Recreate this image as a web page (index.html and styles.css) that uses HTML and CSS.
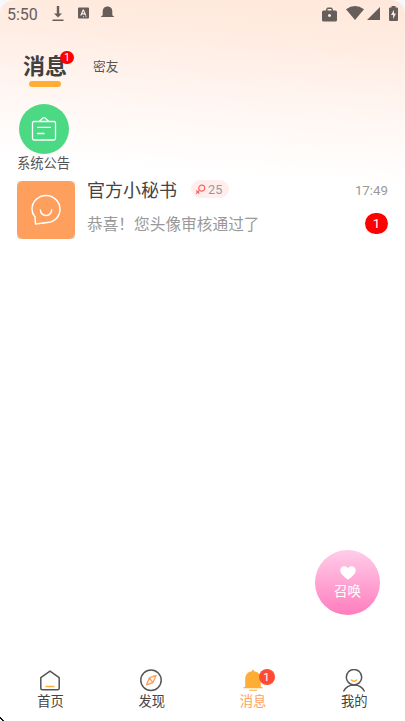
FILE: index.html
```html
<!DOCTYPE html>
<html lang="zh-CN">
<head>
<meta charset="utf-8">
<meta name="viewport" content="width=device-width, initial-scale=1">
<title>消息</title>
<link rel="stylesheet" href="styles.css">
</head>
<body>
<div class="app">
  <header class="status">
    <span class="clock">5:50</span>
    <svg class="s-download" width="12" height="16" viewBox="0 0 12 16"><path d="M4.8 0h2.4v7.4h2.8L6 11.4 2 7.4h2.8zM.5 13.5h11V15H.5z"/></svg>
    <svg class="s-input" width="11" height="12" viewBox="0 0 11 12"><path fill-rule="evenodd" d="M1 .5h9q1 0 1 1v9q0 1-1 1H1q-1 0-1-1v-9q0-1 1-1zM4.7 2.5 2.2 8.5h1.4l.4-1.1h2.6l.4 1.1h1.4L5.9 2.5zM5.3 4.1l.8 2.2H4.5zM5 9.3h1v1H5zM7.5 9.3h1v1h-1z"/></svg>
    <svg class="s-bell" width="13" height="12" viewBox="0 0 13 12"><path d="M5.200.8Q6.500-.2 7.800.8 11.300 1.600 11.300 5.500V9.300L13 10.400V11H0v-.6L1.700 9.300V5.500Q1.700 1.600 5.200.8z"/></svg>
    <span class="spacer"></span>
    <svg class="s-case" width="15" height="15" viewBox="0 0 15 15"><path fill-rule="evenodd" d="M4 3.500V2l1.500-1.500h4L11 2v1.500h2.500Q15 3.500 15 5v8q0 1.500-1.500 1.500h-12Q0 14.500 0 13V5q0-1.500 1.500-1.500zM5.500 3.500h4V2h-4zM7.500 7a1.500 1.500 0 1 0 .01 0z"/></svg>
    <svg class="s-wifi" width="18" height="14" viewBox="0 0 18 14"><path d="M0 3.200Q9-3.200 18 3.200L9 14z"/></svg>
    <svg class="s-signal" width="13" height="13" viewBox="0 0 13 13"><path d="M13 0v13H0z"/></svg>
    <svg class="s-battery" width="9" height="15" viewBox="0 0 9 15"><path fill-rule="evenodd" d="M2.500 0h4v1.500H8q1 0 1 1V14q0 1-1 1H1q-1 0-1-1V2.500q0-1 1-1h1.500zM5 3.700 2 9h2.100v4L7 7.600H5z"/></svg>
  </header>

  <nav class="tabs">
    <div class="tab active">消息<span class="tab-badge">1</span></div>
    <div class="tab">密友</div>
  </nav>

  <section class="notice">
    <div class="notice-icon">
      <svg width="26" height="26" viewBox="0 0 26 26" fill="none" stroke="#fff" stroke-width="1.300" stroke-linecap="round" stroke-linejoin="round"><rect x="1.500" y="5.500" width="23" height="18.500" rx="1.500"/><path d="M8.500 5.200 12 2q1-.8 2 0l3.500 3.200M6.500 11.300h13M6.500 17.500H13"/></svg>
    </div>
    <span>系统公告</span>
  </section>

  <main class="list">
    <article class="chat">
      <div class="avatar-wrap"><div class="avatar">
        <svg width="32" height="32" viewBox="0 0 32 32" fill="none" stroke="#fff" stroke-width="1.500" stroke-linecap="round" stroke-linejoin="round"><path d="M5.500 30 5 22.800C2.700 20.300 2 18 2 15.300A14 13.800 0 0 1 30 15.300C30 22 25 27.800 17.500 28.500zM10.300 16C11.300 23.300 20.700 23.300 21.700 16"/></svg>
      </div></div>
      <div class="chat-body">
        <div class="chat-row">
          <span class="name">官方小秘书</span>
          <span class="age"><svg width="11" height="11" viewBox="0 0 11 11" fill="none" stroke="#ff625f" stroke-width="1.200"><circle cx="6.700" cy="4.200" r="3"/><path d="M4.500 6.400 1 9.900M1.300 6.500l3 3"/></svg>25</span>
          <time>17:49</time>
        </div>
        <div class="chat-row second">
          <span class="preview">恭喜！您头像审核通过了</span>
          <span class="unread">1</span>
        </div>
      </div>
    </article>
  </main>

  <button class="summon">
    <svg width="16" height="14" viewBox="0 0 16 14"><path fill="#fff" d="M8 13.500Q6.800 13.200 3 9.500C.8 7.300.3 5.800.3 4.300.3-.2 6-.9 8 2.300 10-.9 15.700-.2 15.700 4.300c0 1.500-.5 3-2.700 5.200Q9.200 13.200 8 13.500z"/></svg>
    <span>召唤</span>
  </button>

  <footer class="nav">
    <div class="nav-item">
      <svg width="24" height="24" viewBox="0 0 24 24" fill="none" stroke="#555" stroke-width="1.500" stroke-linejoin="round"><path d="M2.800 8.700 12 2.100l9.200 6.600v10.600q0 1.500-1.500 1.500H4.300q-1.500 0-1.500-1.500z"/><path stroke="#ffae35" d="M7.500 17.500h9"/></svg>
      <span>首页</span>
    </div>
    <div class="nav-item">
      <svg width="24" height="24" viewBox="0 0 24 24" fill="none" stroke="#555" stroke-width="1.500" stroke-linejoin="round"><circle cx="12" cy="11.300" r="10.200"/><path stroke="#ff9f61" stroke-width="1.400" d="m17 6.500-6.700 2.400-2.800 7 6.500-2.400zM10.300 8.900l3.700 4.600"/></svg>
      <span>发现</span>
    </div>
    <div class="nav-item current">
      <svg width="24" height="24" viewBox="0 0 24 24" fill="#ffae35"><path d="M11 2.200Q11 .6 12 .6t1 1.600q6.800 1 6.800 7.600v8.200h1.700v1.200h-19v-1.200h1.700V9.800Q4.200 3.200 11 2.200zM8.200 20.800h7.800v1H8.200z"/></svg>
      <span class="nav-badge">1</span>
      <span>消息</span>
    </div>
    <div class="nav-item">
      <svg width="24" height="24" viewBox="0 0 24 24" fill="none" stroke="#555" stroke-width="1.500" stroke-linecap="round"><circle cx="12" cy="8.200" r="7.700"/><path d="M1.800 22C3.500 18.300 6.500 15.900 12 15.900s8.500 2.400 10.200 6.100"/><path stroke="#ffae35" d="M9.300 11q2.700 2.600 5.400 0"/></svg>
      <span>我的</span>
    </div>
  </footer>
  <i class="corner"></i>
</div>
</body>
</html>
```
FILE: styles.css
```css
* { box-sizing: border-box; }
body {
  margin: 0;
  background: #f7f8f9;
  font-family: Roboto, "Noto Sans CJK SC", sans-serif;
  color: #444;
}
.app {
  position: relative;
  display: flex;
  flex-direction: column;
  width: 405px;
  height: 721px;
  overflow: hidden;
  border-radius: 14px 14px 0 0;
  background: linear-gradient(184deg, #ffe8db 0, #ffebe0 40px, #fff3ed 95px, #fffaf8 145px, #fff 188px);
}
.status {
  display: flex;
  align-items: flex-start;
  height: 46px;
  padding: 6px 7px 0;
  color: #655e5a;
}
.status svg { fill: #655e5a; flex: none; }
.clock { font-size: 16px; line-height: 17px; width: 31px; }
.s-download { margin-left: 14px; }
.s-input { margin: 1px 0 0 14px; }
.s-bell { margin-left: 12px; }
.spacer { flex: 1; }
.s-case { margin-top: 1px; }
.s-wifi { margin-left: 9px; }
.s-signal { margin: 1px 0 0 3px; }
.s-battery { margin-left: 9px; }
.tabs {
  display: flex;
  align-items: center;
  gap: 26px;
  height: 42px;
  padding-left: 23px;
}
.tab { font-size: 12.700px; line-height: 20px; color: #555; }
.tab.active {
  position: relative;
  height: 42px;
  padding: 6px 0 0;
  font-size: 22px;
  line-height: 29px;
  font-weight: 700;
  color: #404040;
}
.tab.active::after {
  content: "";
  display: block;
  width: 32px;
  height: 6px;
  margin: 0 auto;
  border-radius: 3px;
  background: #ffae35;
}
.tab-badge {
  position: absolute;
  top: 5px;
  right: -7px;
  width: 14px;
  height: 13px;
  border-radius: 7px;
  background: #f00;
  color: #fff;
  font-size: 10px;
  font-weight: 400;
  line-height: 13px;
  text-align: center;
}
.notice {
  display: flex;
  flex-direction: column;
  align-items: center;
  width: 54px;
  height: 92px;
  margin-left: 17px;
  padding-top: 16px;
  font-size: 13.300px;
  line-height: 19px;
  color: #555;
  white-space: nowrap;
}
.notice span { margin-right: 1px; }
.notice-icon {
  display: flex;
  align-items: center;
  justify-content: center;
  width: 50px;
  height: 50px;
  flex: none;
  border-radius: 50%;
  background: #4cd983;
}
.list { flex: 1; }
.chat { display: flex; gap: 12px; padding: 1px 17px 0; }
.avatar-wrap { width: 58px; height: 58px; background: #dcdcdc; border-radius: 3px; flex: none; }
.avatar {
  display: flex;
  align-items: center;
  justify-content: center;
  height: 58px;
  border-radius: 6px;
  background: #ff9f5e;
}
.chat-body { flex: 1; }
.chat-row { display: flex; align-items: center; height: 18px; }
.chat-row.second { height: 22px; margin-top: 13px; }
.name { font-size: 18px; line-height: 18px; padding-top: 2px; margin-right: -1px; }
.age {
  display: flex;
  align-items: center;
  gap: 2px;
  width: 38px;
  height: 18px;
  margin: -2px 0 0 15px;
  padding-left: 4px;
  border-radius: 9px;
  background: #ffeeed;
  color: #999;
  font-size: 12.700px;
}
time { margin-left: auto; font-size: 13.300px; color: #999; }
.preview { font-size: 15.700px; line-height: 20px; padding-top: 3px; color: #999; }
.unread {
  width: 23px;
  height: 21px;
  margin-left: auto;
  border-radius: 11px;
  background: #f00;
  color: #fff;
  font-size: 13.300px;
  line-height: 21px;
  text-align: center;
}
.summon {
  position: absolute;
  left: 315px;
  top: 550px;
  display: flex;
  flex-direction: column;
  align-items: center;
  gap: 1px;
  width: 65px;
  height: 65px;
  padding: 16px 0 0;
  border: 0;
  border-radius: 50%;
  background: linear-gradient(#ffcde9, #ff7dbe);
  color: #fff;
  font: 13.500px/20px Roboto, "Noto Sans CJK SC", sans-serif;
}
.nav { display: flex; height: 52px; }
.nav-item {
  position: relative;
  flex: 1;
  display: flex;
  flex-direction: column;
  align-items: center;
  font-size: 13.300px;
  line-height: 18px;
}
.nav-item svg { margin-left: -1px; }
.nav-item.current { color: #ff9f61; }
.nav-badge {
  position: absolute;
  left: 56px;
  top: 0;
  width: 16px;
  height: 16px;
  border-radius: 50%;
  background: #ff4b35;
  color: #fff;
  font-size: 11.500px;
  line-height: 16px;
  text-align: center;
}
.corner {
  position: absolute;
  left: 0;
  bottom: 0;
  width: 4px;
  height: 4px;
  background: linear-gradient(45deg, #fff 35%, #111 36% 58%, transparent 59%);
}
```
